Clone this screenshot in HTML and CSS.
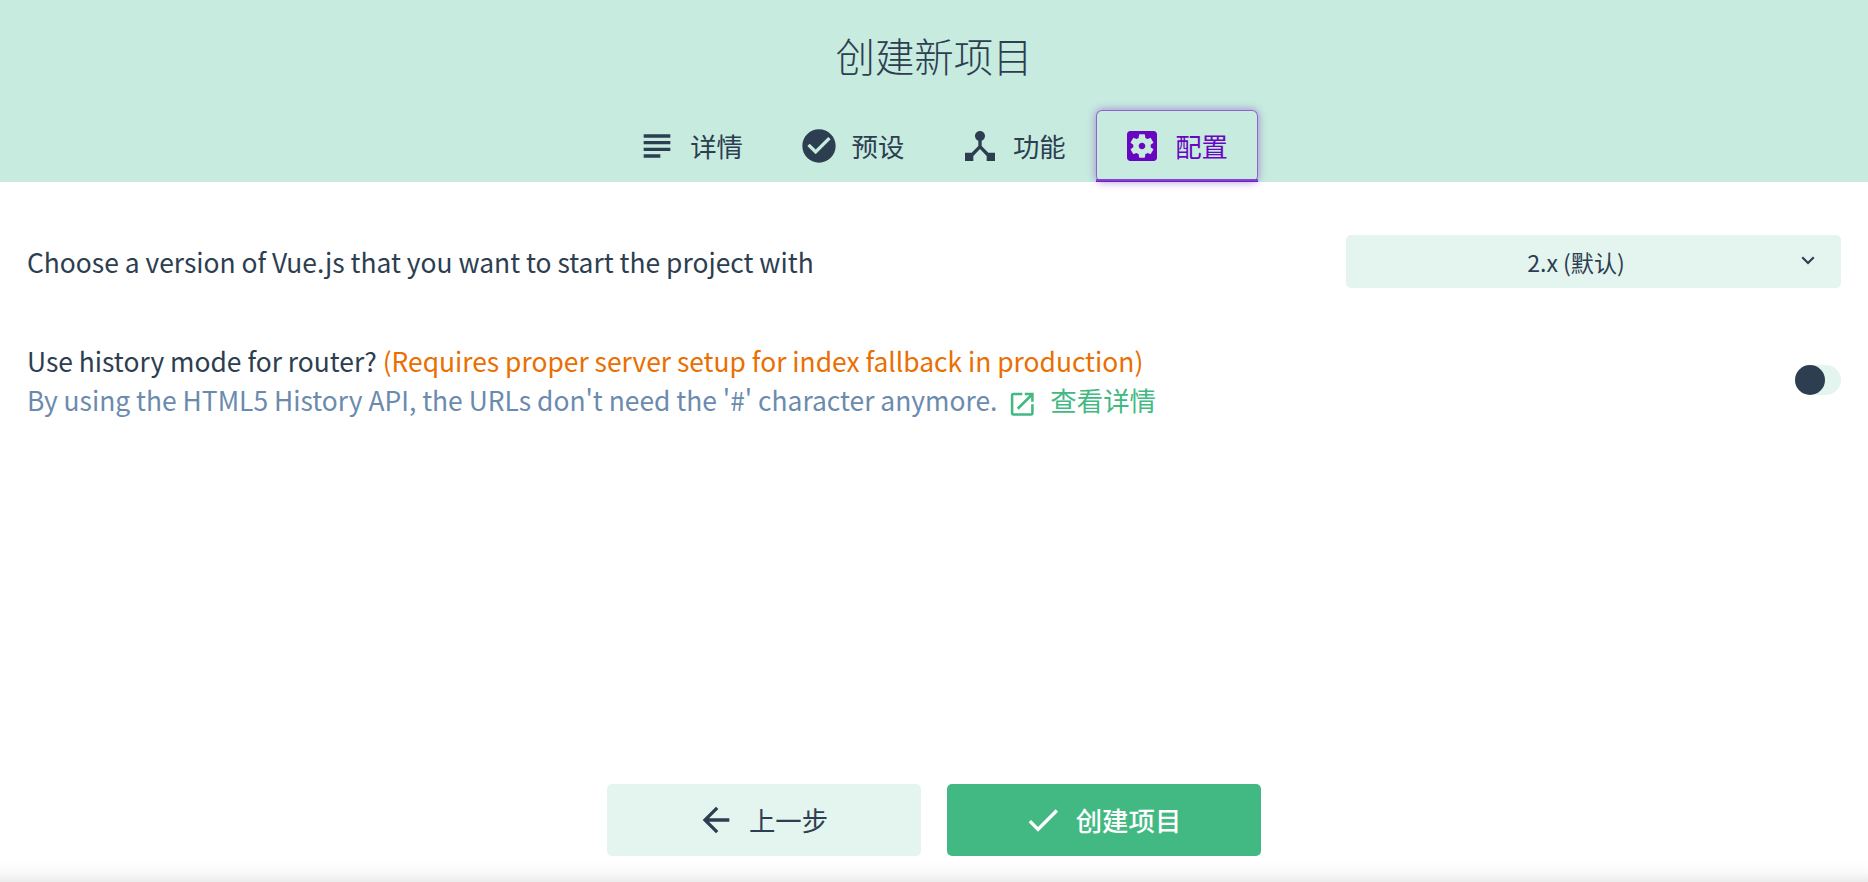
FILE: index.html
```html
<!DOCTYPE html>
<html lang="zh-CN">
<head>
<meta charset="utf-8">
<title>创建新项目</title>
<link rel="stylesheet" href="styles.css">
</head>
<body>
<div class="page">
  <header class="header">
    <h1 class="title">创建新项目</h1>
    <nav class="tabs">
      <a class="tab"><svg class="icon" viewBox="0 0 24 24"><path d="M4 5h16v2H4zM4 9h16v2H4zM4 13h16v2H4zM4 17h10v2H4z"/></svg><span class="text">详情</span></a>
      <a class="tab"><svg class="icon" viewBox="0 0 24 24"><path d="M12 2C6.48 2 2 6.48 2 12s4.48 10 10 10 10-4.48 10-10S17.52 2 12 2zm-2 15l-5-5 1.41-1.41L10 14.17l7.59-7.59L19 8l-9 9z"/></svg><span class="text">预设</span></a>
      <a class="tab"><svg class="icon" viewBox="0 0 24 24"><path d="M17 16l-4-4V8.82C14.16 8.4 15 7.3 15 6c0-1.66-1.34-3-3-3S9 4.34 9 6c0 1.3.84 2.4 2 2.82V12l-4 4H3v5h5v-3.05l4-4.2 4 4.2V21h5v-5h-4z"/></svg><span class="text">功能</span></a>
      <a class="tab active"><svg class="icon" viewBox="0 0 24 24"><path d="M12 10c-1.1 0-2 .9-2 2s.9 2 2 2 2-.9 2-2-.9-2-2-2zm7-7H5c-1.11 0-2 .9-2 2v14c0 1.1.89 2 2 2h14c1.11 0 2-.9 2-2V5c0-1.1-.89-2-2-2zm-1.75 9c0 .23-.02.46-.05.68l1.48 1.16c.13.11.17.3.08.45l-1.4 2.42c-.09.15-.27.21-.43.15l-1.74-.7c-.36.28-.76.51-1.18.69l-.26 1.85c-.03.17-.18.3-.35.3h-2.8c-.17 0-.32-.13-.35-.29l-.26-1.85c-.43-.18-.82-.41-1.18-.69l-1.74.7c-.16.06-.34 0-.43-.15l-1.4-2.42c-.09-.15-.05-.34.08-.45l1.48-1.16c-.03-.23-.05-.46-.05-.69s.02-.46.05-.68l-1.48-1.16c-.13-.11-.17-.3-.08-.45l1.4-2.42c.09-.15.27-.21.43-.15l1.74.7c.36-.28.76-.51 1.18-.69l.26-1.85c.03-.17.18-.3.35-.3h2.8c.17 0 .32.13.35.29l.26 1.85c.43.18.82.41 1.18.69l1.74-.7c.16-.06.34 0 .43.15l1.4 2.42c.09.15.05.34-.08.45l-1.48 1.16c.03.23.05.46.05.69z"/></svg><span class="text">配置</span></a>
    </nav>
  </header>
  <main class="content">
    <section class="row version">
      <div class="label">Choose a version of Vue.js that you want to start the project with</div>
      <button class="select"><span class="value">2.x (默认)</span><svg class="caret" viewBox="0 0 24 24"><path d="M7.41 7.84L12 12.42l4.59-4.58L18 9.25l-6 6-6-6z"/></svg></button>
    </section>
    <section class="row history">
      <div>
        <div class="label">Use history mode for router? <span class="warning">(Requires proper server setup for index fallback in production)</span></div>
        <div class="label description">By using the HTML5 History API, the URLs don't need the '#' character anymore.<a class="link"><svg class="launch" viewBox="0 0 24 24"><path d="M19 19H5V5h7V3H5c-1.11 0-2 .9-2 2v14c0 1.1.89 2 2 2h14c1.1 0 2-.9 2-2v-7h-2v7zM14 3v2h3.59l-9.83 9.83 1.41 1.41L19 6.41V10h2V3h-7z"/></svg>查看详情</a></div>
      </div>
      <div class="switch"><span class="knob"></span></div>
    </section>
  </main>
  <footer class="actions">
    <button class="button"><svg class="icon" viewBox="0 0 24 24"><path d="M20 11H7.83l5.59-5.59L12 4l-8 8 8 8 1.41-1.41L7.83 13H20z"/></svg><span class="text">上一步</span></button>
    <button class="button primary"><svg class="icon" viewBox="0 0 24 24"><path d="M9 16.17L4.83 12l-1.42 1.41L9 19 21 7l-1.41-1.41z"/></svg><span class="text">创建项目</span></button>
  </footer>
</div>
</body>
</html>
```
FILE: styles.css
```css
* { box-sizing: border-box; }
body {
  margin: 0;
  background: #fff;
  color: #2c3e50;
  font: 400 26.4px/39px "Noto Sans CJK SC", sans-serif;
}
svg { fill: currentColor; flex: none; }
button { border: 0; margin: 0; padding: 0; color: inherit; font: inherit; }
.page {
  height: 882px;
  display: flex;
  flex-direction: column;
}
.header {
  height: 182px;
  background: #c7ebdf;
  display: flex;
  flex-direction: column;
  align-items: center;
  justify-content: space-between;
}
.title {
  margin: 25px 0 0;
  font-size: 39.4px;
  line-height: 60px;
  font-weight: 300;
}
.tabs { display: flex; height: 72px; }
.tab {
  width: 161.4px;
  padding-left: 26px;
  display: flex;
  align-items: center;
  gap: 13px;
}
.icon { width: 40px; height: 40px; }
.text { padding-bottom: 2px; }
.active {
  position: relative;
  width: 162px;
  margin-left: .8px;
  margin-right: -1.4px;
  color: #6806c1;
  border-radius: 6px;
  box-shadow: inset 0 0 0 1px #945fcf, 0 0 9px rgba(104, 6, 193, .45);
}
.active::after {
  content: "";
  position: absolute;
  left: 0;
  right: 0;
  bottom: 0;
  height: 3px;
  background: linear-gradient(#8244c8 66%, #6f1ebd 66%);
}
.content { flex: 1; padding: 53px 27px 0; }
.row { display: flex; justify-content: space-between; align-items: center; }
.version { height: 53px; }
.history { height: 78px; margin-top: 53px; }
.warning { color: #ea6e00; }
.description { color: #6b8bae; }
.select {
  width: 495px;
  height: 53px;
  padding-right: 20px;
  border-radius: 5px;
  background: #e4f4ee;
  display: flex;
  align-items: center;
  font-size: 23.1px;
}
.value { flex: 1; padding: 2px 0 0 11px; }
.caret { width: 26px; height: 26px; margin-top: -1px; }
.link { color: #42b983; margin-left: 10px; }
.launch { width: 30.5px; height: 30.5px; margin-right: 12.5px; vertical-align: -8px; }
.switch {
  width: 46px;
  height: 30px;
  margin-bottom: 1px;
  border-radius: 15px;
  background: #e4f4ee;
}
.knob {
  display: block;
  width: 30px;
  height: 30px;
  border-radius: 50%;
  background: #2c3e50;
}
.actions {
  height: 98px;
  display: flex;
  justify-content: center;
  align-items: flex-start;
  gap: 26px;
  background: linear-gradient(transparent 76px, rgba(0, 0, 0, .02) 88px, rgba(0, 0, 0, .08));
}
.button {
  width: 314px;
  height: 72px;
  padding-right: 4px;
  border-radius: 5px;
  background: #e4f4ee;
  display: flex;
  align-items: center;
  justify-content: center;
  gap: 13px;
}
.primary { background: #42b983; color: #fff; font-weight: 500; }
```
